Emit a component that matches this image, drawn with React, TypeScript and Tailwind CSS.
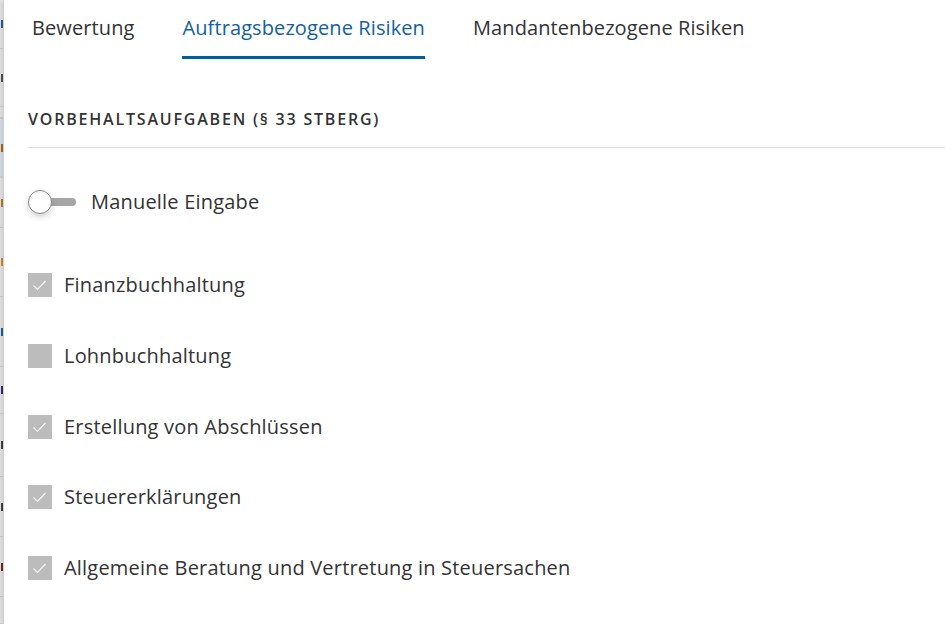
import React from 'react';

const font = { fontFamily: '"Open Sans", "Noto Sans", sans-serif' };

const tabs = [
  { label: 'Bewertung', active: false },
  { label: 'Auftragsbezogene Risiken', active: true },
  { label: 'Mandantenbezogene Risiken', active: false },
];

const items = [
  { label: 'Finanzbuchhaltung', checked: true },
  { label: 'Lohnbuchhaltung', checked: false },
  { label: 'Erstellung von Abschlüssen', checked: true },
  { label: 'Steuererklärungen', checked: true },
  { label: 'Allgemeine Beratung und Vertretung in Steuersachen', checked: true },
];

// rows of the list panel that peeks out behind the dialog
const stripRows = [
  { h: 'h-[49px]', mark: 'bg-[#2a5d9a]', bg: '' },
  { h: 'h-[58px]', mark: 'bg-[#555]', bg: '' },
  { h: 'h-[11px]', mark: '', bg: '' },
  { h: 'h-[59px]', mark: 'bg-[#b5651d]', bg: 'bg-[#dbe6f0] border-t border-[#3b7fc4]' },
  { h: 'h-[51px]', mark: 'bg-[#c0782a]', bg: 'border-t border-[#3b7fc4]' },
  { h: 'h-[69px]', mark: 'bg-[#d08a2a]', bg: '' },
  { h: 'h-[70px]', mark: 'bg-[#1d5fa8]', bg: '' },
  { h: 'h-[47px]', mark: 'bg-[#3b2a6e]', bg: '' },
  { h: 'h-[63px]', mark: 'bg-[#444]', bg: '' },
  { h: 'h-[60px]', mark: 'bg-[#444]', bg: '' },
  { h: 'h-[60px]', mark: 'bg-[#7a2a1a]', bg: '' },
  { h: 'flex-1', mark: '', bg: '' },
];

function Check() {
  return (
    <svg width="24" height="24" viewBox="0 0 24 24" fill="none">
      <path d="M5.5 12.5 L9.5 16.5 L17.5 8" stroke="white" strokeOpacity="0.85" strokeWidth="1.2" />
    </svg>
  );
}

export default function App() {
  return (
    <div className="flex h-[624px] w-[945px] overflow-hidden bg-white text-[#333]" style={font}>
      <div className="flex w-[3px] flex-col bg-[#ebebeb]">
        {stripRows.map((r, i) => (
          <div key={i} className={`${r.h} ${r.bg} flex items-center justify-end border-b border-[#d6d6d6]`}>
            {r.mark && <span className={`h-[8px] w-[2px] ${r.mark}`} />}
          </div>
        ))}
      </div>

      <div className="flex flex-1 flex-col border-l border-[#cfcfcf] pl-[24px] shadow-[-3px_0_6px_rgba(0,0,0,0.12)]">
        <div className="flex h-[59px] gap-[48px] pl-[4px]">
          {tabs.map((t) => (
            <div
              key={t.label}
              className={`flex h-full items-start border-b-[3px] pt-[14px] text-[20px] leading-[28px] tracking-[0.1px] ${
                t.active ? 'border-[#00609f] text-[#12619f]' : 'border-transparent text-[#333]'
              }`}
            >
              {t.label}
            </div>
          ))}
        </div>

        <div className="mt-[48px] border-b border-[#dcdcdc] pb-[16px] text-[16px] font-semibold leading-[24px] tracking-[1.8px] text-[#333]">
          VORBEHALTSAUFGABEN (§ 33 STBERG)
        </div>

        <div className="mt-[42px] flex h-[24px] items-center gap-[15px]">
          <div className="relative h-[24px] w-[48px]">
            <div className="absolute left-[12px] top-[8px] h-[8px] w-[36px] rounded-full bg-[#a6a6a6]" />
            <div className="absolute left-0 top-0 h-[24px] w-[24px] rounded-full border border-[#8a8a8a] bg-white shadow-[0_3px_6px_rgba(0,0,0,0.18)]" />
          </div>
          <span className="text-[20px] leading-[24px] tracking-[0.2px]">Manuelle Eingabe</span>
        </div>

        <div className="mt-[59px] flex flex-col gap-[46.75px]">
          {items.map((it) => (
            <div key={it.label} className="flex h-[24px] items-center gap-[12px]">
              <div className="flex h-[24px] w-[24px] items-center justify-center bg-[#bcbcbc]">
                {it.checked && <Check />}
              </div>
              <span className="text-[20px] leading-[24px] tracking-[0.2px]">{it.label}</span>
            </div>
          ))}
        </div>
      </div>
    </div>
  );
}
